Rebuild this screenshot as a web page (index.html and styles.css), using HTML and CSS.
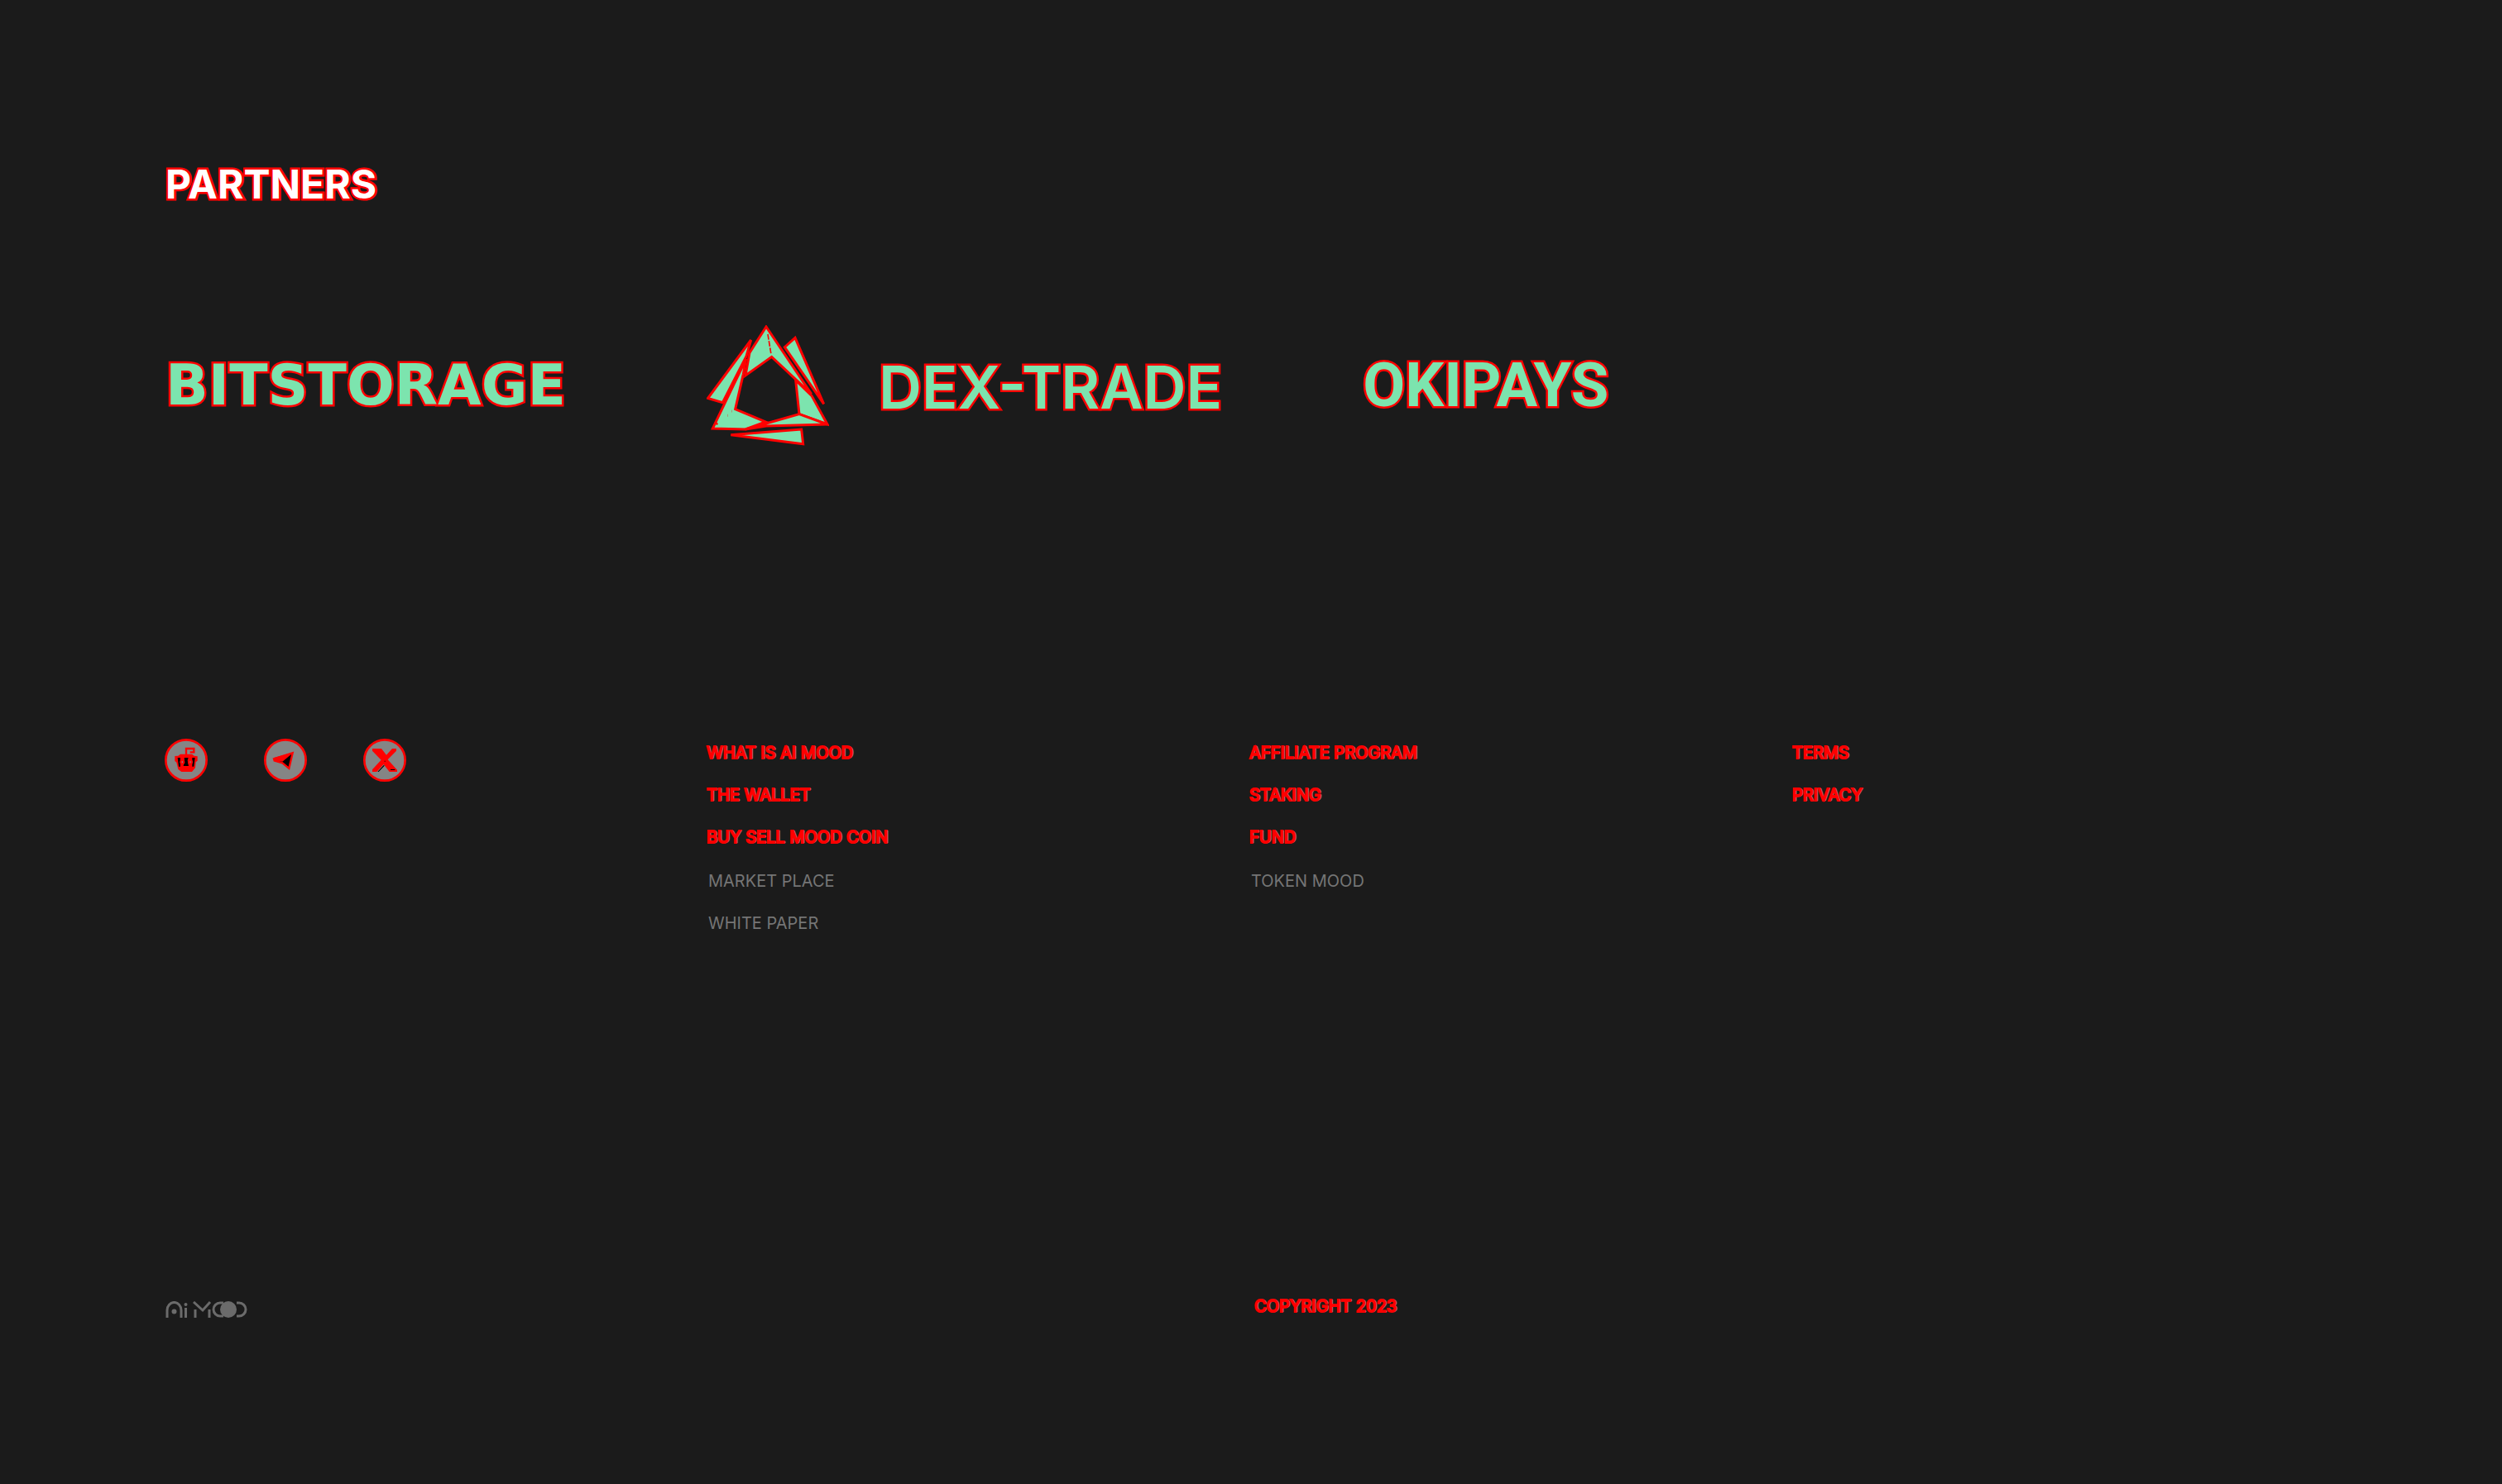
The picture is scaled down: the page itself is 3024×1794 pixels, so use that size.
FILE: index.html
```html
<!DOCTYPE html>
<html lang="en">
<head>
<meta charset="utf-8">
<title>Ai Mood</title>
<link rel="stylesheet" href="styles.css">
</head>
<body>
<main class="partners">
  <h2 class="title">PARTNERS</h2>
  <div class="logos">
    <a class="brand bitstorage" href="#">BITSTORAGE</a>
    <a class="brand dex" href="#">
      <svg class="mark" viewBox="24 22 444 438" aria-hidden="true">
        <g fill="#7ce4ae" stroke="#f00" stroke-width="9">
          <path d="M240 28 180 122 165 205 260 137 404 272Z"/>
          <path d="M345 68 307 102 449 308Z"/>
          <path d="M347 222 405 278 462 382 360 345Z"/>
          <path d="M185 76 29 287 82 303 168 135Z"/>
          <path d="M167 145 46 397 165 400 238 373 128 327 157 200Z"/>
          <path d="M165 400 360 345 462 382 240 388Z"/>
          <path d="M112 420 368 400 374 453Z"/>
          <path d="M246 55 258 128" stroke-width="5" stroke-dasharray="20 5"/>
          <path d="M58 382 75 367M99 350h1M115 334h1" stroke-dasharray="7 20"/>
        </g>
      </svg>
      <span class="name">DEX-TRADE</span>
    </a>
    <a class="brand okipays" href="#">OKIPAYS</a>
  </div>
</main>
<footer class="footer">
  <div class="columns">
    <div class="social">
      <a href="#" aria-label="Reddit"><svg viewBox="27 39 156 156">
        <circle cx="105" cy="117" r="74" fill="#858585" stroke="#f00" stroke-width="8"/>
        <path d="M64 102 76 101 84 95H126L134 101 146 103V119L140 124 138 145 126 159H88L76 150 70 125 64 120Z" fill="#f00"/>
        <path d="M105 98V75H133V88H119" fill="none" stroke="#f00" stroke-width="7"/>
        <path d="M74 108h10v32h-6zM98 108h15l-3 10 4 20h-19l4-20zM127 108h10l-4 32h-6z" fill="#000"/>
        <circle cx="91" cy="124" r="9" fill="#f00"/><circle cx="120" cy="124" r="9" fill="#f00"/>
        <path d="M89 121h4v6h-4zM118 121h4v6h-4z" fill="#858585"/>
      </svg></a>
      <a href="#" aria-label="Telegram"><svg viewBox="27 39 156 156">
        <circle cx="105" cy="117" r="74" fill="#858585" stroke="#f00" stroke-width="8"/>
        <path d="M63 112 131 91 118 147 94 127 65 119Z" fill="#000" stroke="#f00" stroke-width="7"/>
        <path d="M63 108 120 92 123 98 94 122 63 119Z" fill="#f00"/>
      </svg></a>
      <a href="#" aria-label="X"><svg viewBox="27 39 156 156">
        <circle cx="105" cy="117" r="74" fill="#858585" stroke="#f00" stroke-width="8"/>
        <path d="M60 75H93L111 98 132 75H147V83L116 115 150 152V159H122L101 132 76 159H60V151L92 116 60 83Z" fill="#f00"/>
        <path d="M126 150h16v3h-16zM104 119h3v3h-3zM79 159 102 134 104 137 83 159z" fill="#000"/>
      </svg></a>
    </div>
    <nav class="links">
      <a class="hot" href="#">WHAT IS AI MOOD</a>
      <a class="hot" href="#">THE WALLET</a>
      <a class="hot" href="#">BUY SELL MOOD COIN</a>
      <span>MARKET PLACE</span>
      <span>WHITE PAPER</span>
    </nav>
    <nav class="links">
      <a class="hot" href="#">AFFILIATE PROGRAM</a>
      <a class="hot" href="#">STAKING</a>
      <a class="hot" href="#">FUND</a>
      <span>TOKEN MOOD</span>
    </nav>
    <nav class="links">
      <a class="hot" href="#">TERMS</a>
      <a class="hot" href="#">PRIVACY</a>
    </nav>
  </div>
  <div class="bottom">
    <svg class="logo" viewBox="0 0 100 20" role="img" aria-label="Ai Mood">
      <g fill="none" stroke="#6b6b6b" stroke-width="3">
        <path d="M2 20V11a8 9 0 0 1 17 0V20M24.500 8V20M36 10V20M34 1 45 11 54 1M53 10V20"/>
        <path d="M70 2H66a8 8 0 0 0 0 16h4M86 2h3a8 8 0 0 1 0 16h-3"/>
      </g>
      <g fill="#6b6b6b"><circle cx="10.500" cy="12.500" r="3"/><circle cx="24.500" cy="4" r="2"/><circle cx="76" cy="10" r="10"/></g>
    </svg>
    <p class="copyright hot">COPYRIGHT 2023</p>
  </div>
</footer>
</body>
</html>
```
FILE: styles.css
```css
* { box-sizing: border-box; }
body {
  margin: 0;
  padding: 193px 200px 0;
  background: #1b1b1b;
  color: #757575;
  font-family: Inter, sans-serif;
  font-size: 20px;
  line-height: 24px;
}
a { color: inherit; text-decoration: none; }
.title,
.brand {
  -webkit-text-stroke: 5px #f00;
  paint-order: stroke fill;
}
.title {
  margin: 0;
  color: #fff;
  font-size: 48px;
  font-weight: 700;
  line-height: 60px;
}
.logos {
  display: flex;
  align-items: center;
  gap: 170px;
  margin-top: 140px;
}
.brand {
  color: #7ce4ae;
  line-height: 80px;
  white-space: nowrap;
}
.bitstorage { font-family: "DejaVu Sans", sans-serif; font-size: 68px; font-weight: 700; }
.dex { display: flex; align-items: center; gap: 60px; font-size: 72px; font-weight: 600; }
.okipays { font-family: Roboto, sans-serif; font-size: 74px; font-weight: 700; }
.mark { display: block; width: 148px; height: 146px; paint-order: normal; }
.name { padding-top: 4px; }
.footer { margin-top: 354px; }
.columns {
  display: grid;
  grid-template-columns: repeat(4, 1fr);
  min-height: 666px;
}
.social { display: flex; align-items: flex-start; gap: 68px; margin-left: -1px; }
.social svg { display: block; width: 52px; height: 52px; }
.links {
  display: flex;
  flex-direction: column;
  align-items: flex-start;
  gap: 27px;
  padding-top: 5px;
}
.links .hot { margin-left: -2px; }
.links .hot + span { margin-top: 2px; }
.hot {
  color: #f00;
  -webkit-text-stroke: 2px #f00;
  text-shadow: 2px 0 #6b6b6b;
}
.bottom {
  display: grid;
  grid-template-columns: repeat(2, 1fr);
  align-items: start;
  padding: 8px 0;
}
.logo { width: 100px; height: 20px; margin-top: 6px; }
.copyright { margin: 0; padding-left: 4px; }
```
